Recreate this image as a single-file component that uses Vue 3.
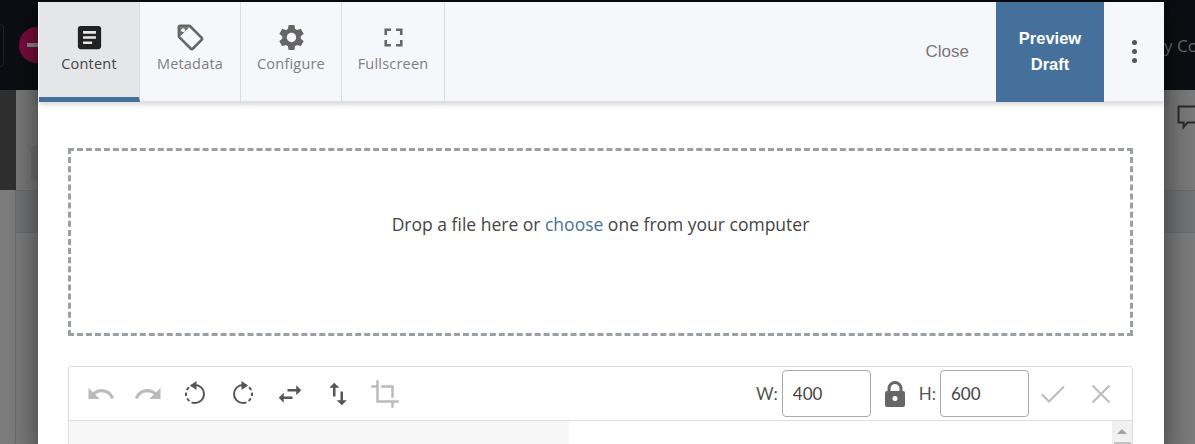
<script setup>
const tabs = [
  { label: "Content", width: 101, active: true, icon: "M19 3H5c-1.1 0-2 .9-2 2v14c0 1.1.9 2 2 2h14c1.1 0 2-.9 2-2V5c0-1.1-.9-2-2-2zm-5 14H7v-2h7v2zm3-4H7v-2h10v2zm0-4H7V7h10v2z" },
  { label: "Metadata", width: 101, tag: true, icon: "M21.41 11.58l-9-9C12.05 2.22 11.55 2 11 2H4c-1.1 0-2 .9-2 2v7c0 .55.22 1.05.59 1.42l9 9c.36.36.86.58 1.41.58s1.05-.22 1.41-.59l7-7c.37-.36.59-.86.59-1.41s-.23-1.06-.59-1.42zM13 20.01L4 11V4h7v-.01l9 9-7 7.02z" },
  { label: "Configure", width: 101, icon: "M19.14 12.94c.04-.3.06-.61.06-.94 0-.32-.02-.64-.07-.94l2.03-1.58c.18-.14.23-.41.12-.61l-1.92-3.32c-.12-.22-.37-.29-.59-.22l-2.39.96c-.5-.38-1.03-.7-1.62-.94l-.36-2.54c-.04-.24-.24-.41-.48-.41h-3.84c-.24 0-.43.17-.47.41l-.36 2.54c-.59.24-1.13.57-1.62.94l-2.39-.96c-.22-.08-.47 0-.59.22L2.74 8.87c-.12.21-.08.47.12.61l2.03 1.58c-.05.3-.09.63-.09.94s.02.64.07.94l-2.03 1.58c-.18.14-.23.41-.12.61l1.92 3.32c.12.22.37.29.59.22l2.39-.96c.5.38 1.03.7 1.62.94l.36 2.54c.05.24.24.41.48.41h3.84c.24 0 .44-.17.47-.41l.36-2.54c.59-.24 1.13-.56 1.62-.94l2.39.96c.22.08.47 0 .59-.22l1.92-3.32c.12-.22.07-.47-.12-.61l-2.01-1.58zM12 15.6c-1.98 0-3.6-1.62-3.6-3.6s1.62-3.6 3.6-3.6 3.6 1.62 3.6 3.6-1.62 3.6-3.6 3.6z" },
  { label: "Fullscreen", width: 103, icon: "M7 14H5v5h5v-2H7v-3zm-2-4h2V7h3V5H5v5zm12 7h-3v2h5v-5h-2v3zM14 5v2h3v3h2V5h-5z" },
]

const tools = [
  { name: "undo", off: true, d: "M12.5 8c-2.65 0-5.05.99-6.9 2.6L2 7v9h9l-3.62-3.62c1.39-1.16 3.16-1.88 5.12-1.88 3.54 0 6.55 2.31 7.6 5.5l2.37-.78C21.08 11.03 17.15 8 12.5 8z" },
  { name: "redo", off: true, d: "M18.4 10.6C16.55 8.99 14.15 8 11.5 8c-4.65 0-8.58 3.03-9.96 7.22L3.9 16c1.05-3.19 4.05-5.5 7.6-5.5 1.95 0 3.73.72 5.12 1.88L13 16h9V7l-3.6 3.6z" },
  { name: "left", rotate: "left" },
  { name: "right", rotate: "right" },
  { name: "flip-h", d: "M6.99 11L3 15l3.99 4v-3H14v-2H6.99v-3zM21 9l-3.99-4v3H10v2h7.01v3L21 9z" },
  { name: "flip-v", d: "M16 17.01V10h-2v7.01h-3L15 21l4-3.99h-3zM9 3L5 6.99h3V14h2V6.99h3L9 3z" },
  { name: "crop", off: true, d: "M17 15h2V5H9v2h8v8zM7 17V1H5v4H1v2h4v12h12v4h2v-4h4v-2H7z" },
]
</script>

<template>
  <div class="page">
    <div class="backdrop">
      <div class="top-bar">
        <span class="outline-btn"></span>
        <span class="add-btn"><i></i></span>
        <span class="top-text">y Co</span>
      </div>
      <div class="band">
        <span class="band-pill"></span>
        <svg class="bubble" width="24" height="26" viewBox="0 0 24 26">
          <path d="M1.5 2.5h21v16h-12l-4 4.500v-4.500h-5z" fill="none" stroke="#2b2b2b" stroke-width="2" />
        </svg>
      </div>
      <div class="lower">
        <div class="row-line"></div>
      </div>
    </div>

    <div class="modal">
      <div class="toolbar">
        <div
          v-for="tab in tabs"
          :key="tab.label"
          class="tab"
          :class="{ active: tab.active }"
          :style="{ width: tab.width + 'px' }"
        >
          <svg width="31" height="31" viewBox="0 0 24 24" fill="currentColor">
            <path :d="tab.icon" />
            <template v-if="tab.tag">
              <path d="M4 4h7L4 11z" />
              <circle cx="6.300" cy="6.300" r="1.500" fill="#f5f7fa" />
            </template>
          </svg>
          <span>{{ tab.label }}</span>
        </div>
        <div class="close">Close</div>
        <div class="preview">Preview<br />Draft</div>
        <div class="more"><i></i><i></i><i></i></div>
      </div>

      <div class="body">
        <div class="dropzone">
          Drop a file here or&nbsp;<a>choose</a>&nbsp;one from your computer
        </div>

        <div class="editor">
          <div class="editor-bar">
            <div
              v-for="tool in tools"
              :key="tool.name"
              class="tool"
              :class="{ off: tool.off }"
            >
              <svg v-if="tool.d" width="30" height="30" viewBox="0 0 24 24" fill="currentColor">
                <path :d="tool.d" />
              </svg>
              <svg v-else width="30" height="30" viewBox="0 0 30 30" :class="{ mirror: tool.rotate === 'right' }">
                <path d="M15 6a9 9 0 0 1 0 18" fill="none" stroke="currentColor" stroke-width="2" />
                <path d="M15 24a9 9 0 0 1 0-18" fill="none" stroke="currentColor" stroke-width="2" stroke-dasharray="3.500 2.500" />
                <path d="M16.500 2L10 6.500l6.500 4.500z" fill="currentColor" />
              </svg>
            </div>

            <div class="size">
              <label>W:</label>
              <input value="400" />
              <svg class="lock" width="20" height="26" viewBox="0 0 20 26">
                <path d="M4 11V7.500a6 6 0 0 1 12 0V11" fill="none" stroke="#666" stroke-width="3" />
                <rect y="10" width="20" height="16" rx="2" fill="#666" />
                <circle cx="10" cy="17.500" r="2.500" fill="#fff" />
              </svg>
              <label>H:</label>
              <input value="600" />
              <svg class="check" width="24" height="18" viewBox="0 0 24 18">
                <path d="M1 9.500L8 16.500 23 1.500" fill="none" stroke="#bbb" stroke-width="2" />
              </svg>
              <svg class="cross" width="20" height="18" viewBox="0 0 20 18">
                <path d="M1.500 .5l17 17M18.500 .5l-17 17" fill="none" stroke="#bbb" stroke-width="2" />
              </svg>
            </div>
          </div>
          <div class="canvas">
            <div class="canvas-left"></div>
            <div class="scroll">
              <span class="arrow"></span>
              <span class="thumb"></span>
            </div>
          </div>
        </div>
      </div>
    </div>
  </div>
</template>

<style>
html,
body {
  margin: 0;
  overflow: hidden;
}
</style>

<style scoped>
.page {
  position: relative;
  width: 1195px;
  height: 444px;
  overflow: hidden;
  background: #7c7c7c;
  font-family: "Open Sans", sans-serif;
}
.backdrop {
  height: 100%;
}
.top-bar {
  position: relative;
  height: 90px;
  background: #0c0e13;
}
.outline-btn {
  position: absolute;
  left: -10px;
  top: 24px;
  width: 12px;
  height: 41px;
  border: 1px solid #1a2530;
  border-radius: 4px;
}
.add-btn {
  position: absolute;
  left: 19px;
  top: 27px;
  width: 36px;
  height: 36px;
  border-radius: 50%;
  background: #7a0c3c;
}
.add-btn i {
  position: absolute;
  left: 8px;
  top: 16px;
  width: 20px;
  height: 4px;
  background: #8a8a8a;
}
.top-text {
  position: absolute;
  left: 1164px;
  top: 33px;
  font-size: 17px;
  line-height: 26px;
  color: #6a6a6a;
  white-space: nowrap;
}
.band {
  position: relative;
  height: 100px;
  border-left: 16px solid #2f2f2f;
  background: #7a7a7a;
}
.band-pill {
  position: absolute;
  left: 15px;
  top: 55px;
  width: 20px;
  height: 36px;
  border-radius: 4px;
  background: #727272;
}
.bubble {
  position: absolute;
  left: 1161px;
  top: 14px;
}
.lower {
  height: 254px;
  margin-left: 15px;
  border-left: 1px solid #6d6d6d;
}
.row-line {
  height: 41px;
  border-top: 1px solid #6d6d6d;
  border-bottom: 1px solid #6d6d6d;
  background: #727476;
}
.modal {
  position: absolute;
  left: 38px;
  top: 2px;
  width: 1126px;
  height: 460px;
  background: #fff;
  box-shadow: 0 0 30px rgba(0, 0, 0, 0.55);
}
.toolbar {
  display: flex;
  height: 100px;
  box-sizing: border-box;
  border-bottom: 1px solid #dde1e7;
  background: #f5f7fa;
  box-shadow: 0 2px 6px rgba(0, 0, 0, 0.18);
  position: relative;
}
.tab {
  display: flex;
  flex-direction: column;
  align-items: center;
  box-sizing: border-box;
  height: 100px;
  padding-top: 20px;
  border-right: 1px solid #d9dde3;
  font-size: 14.500px;
  line-height: 22px;
  letter-spacing: 0.2px;
  color: #808080;
}
.tab svg {
  display: block;
  color: #666;
}
.tab.active {
  margin-left: 1px;
  width: 101px !important;
  background: #e5e6e8;
  border-bottom: 5px solid #44709b;
  color: #444;
}
.tab.active svg {
  color: #222;
}
.close {
  margin-left: auto;
  align-self: center;
  margin-right: 27px;
  font-family: "Liberation Sans", Arial, sans-serif;
  font-size: 17px;
  color: #777;
}
.preview {
  display: flex;
  align-items: center;
  justify-content: center;
  box-sizing: border-box;
  width: 108px;
  text-align: center;
  height: 100px;
  padding-bottom: 2px;
  background: #44709b;
  color: #fff;
  font-family: "Liberation Sans", Arial, sans-serif;
  font-size: 16.500px;
  font-weight: 700;
  line-height: 26px;
}
.more {
  display: flex;
  flex-direction: column;
  align-items: center;
  justify-content: center;
  gap: 4px;
  width: 60px;
}
.more i {
  width: 5px;
  height: 5px;
  border-radius: 50%;
  background: #555;
}
.body {
  padding: 46px 31px 0 30px;
}
.dropzone {
  display: flex;
  align-items: center;
  justify-content: center;
  box-sizing: border-box;
  height: 188px;
  padding-bottom: 36px;
  border: 3px dashed #999fa5;
  font-size: 17.500px;
  color: #444;
}
.dropzone a {
  color: #44709b;
}
.editor {
  margin-top: 30px;
  border: 1px solid #d9dde6;
  border-radius: 3px;
}
.editor-bar {
  display: flex;
  align-items: center;
  height: 53px;
  padding-left: 8px;
  border-bottom: 1px solid #d9dde6;
}
.tool {
  display: flex;
  align-items: center;
  justify-content: center;
  width: 47.400px;
  color: #555;
}
.tool.off {
  color: #bbb;
}
.tool svg {
  display: block;
}
.mirror {
  transform: scaleX(-1);
}
.size {
  display: flex;
  align-items: center;
  margin-left: auto;
  margin-right: 21px;
  font-family: "Lato", sans-serif;
  font-size: 17px;
  color: #555;
}
.size label {
  margin-right: 4px;
}
.size input {
  box-sizing: border-box;
  width: 89px;
  height: 47px;
  padding: 0 10px;
  border: 1px solid #aaa;
  border-radius: 4px;
  outline: none;
  font: inherit;
  color: #444;
}
.lock {
  margin: 0 14px;
}
.check {
  margin-left: 12px;
}
.cross {
  margin-left: 26px;
}
.canvas {
  display: flex;
  height: 60px;
}
.canvas-left {
  width: 500px;
  background: #f7f7f7;
}
.scroll {
  position: relative;
  width: 20px;
  margin-left: auto;
  background: #f1f1f1;
}
.arrow {
  position: absolute;
  left: 5px;
  top: 8px;
  border-left: 5px solid transparent;
  border-right: 5px solid transparent;
  border-bottom: 5px solid #a3a3a3;
}
.thumb {
  position: absolute;
  left: 2px;
  top: 21px;
  width: 17px;
  height: 30px;
  background: #c1c1c1;
}
</style>
